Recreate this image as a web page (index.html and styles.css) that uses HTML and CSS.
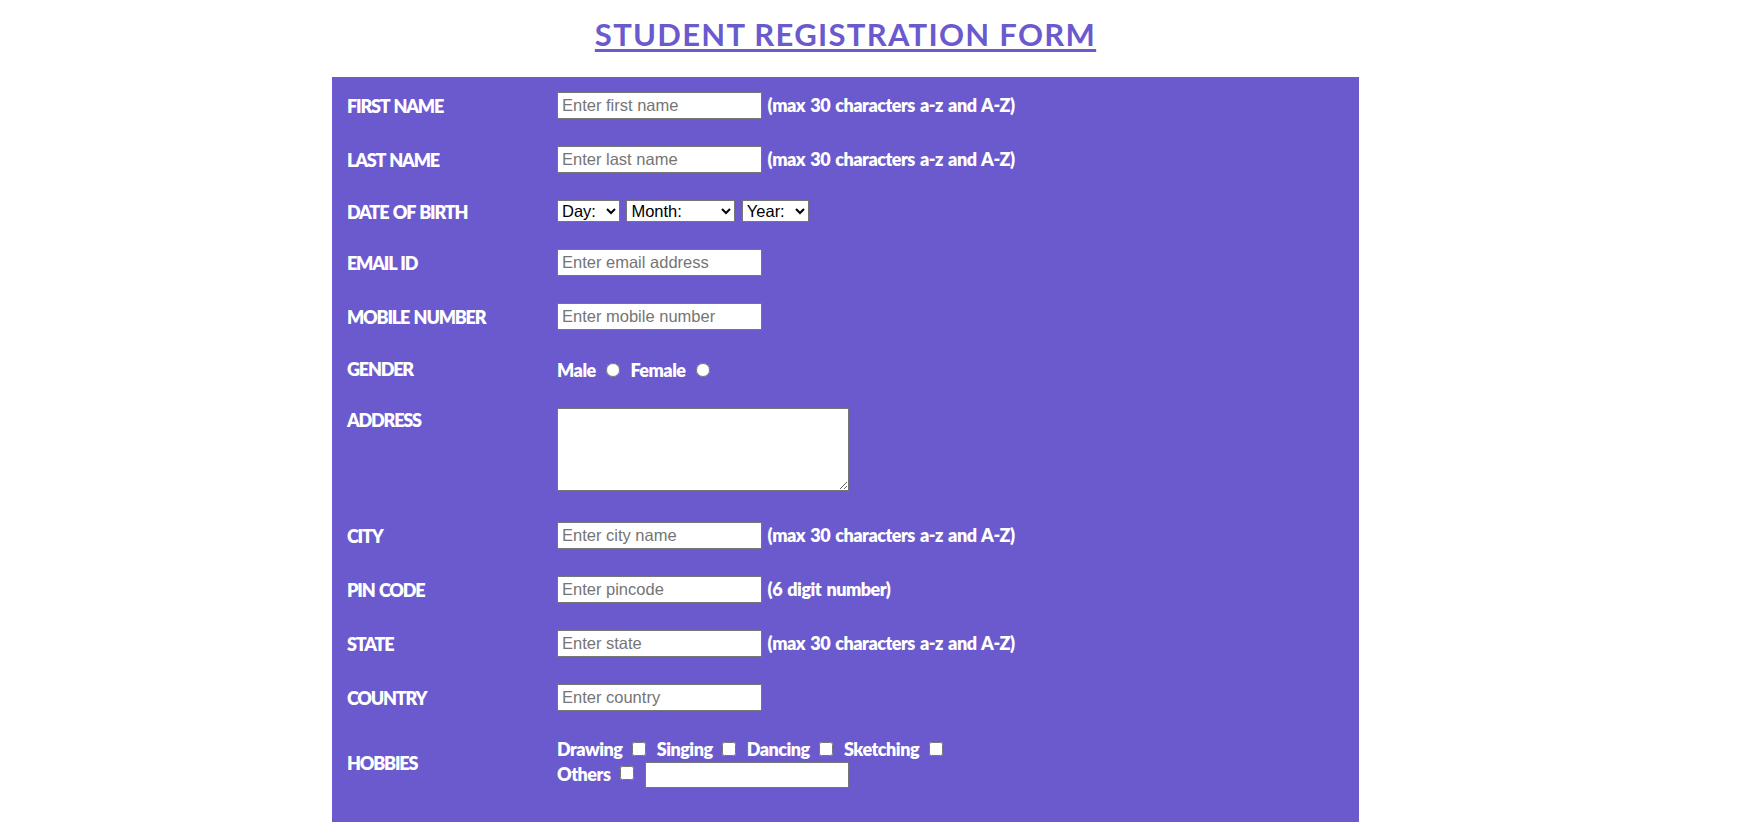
FILE: index.html
```html
<!DOCTYPE html>
<html lang="en">
<head>
<meta charset="utf-8">
<title>Student Registration Form</title>
<link rel="stylesheet" href="styles.css">
</head>
<body>
<div class="page">
  <h1 class="title">STUDENT REGISTRATION FORM</h1>
  <form class="form">
    <div class="label">FIRST NAME</div>
    <div class="field"><input class="text" type="text" placeholder="Enter first name"><span class="hint">(max 30 characters a-z and A-Z)</span></div>

    <div class="label">LAST NAME</div>
    <div class="field"><input class="text" type="text" placeholder="Enter last name"><span class="hint">(max 30 characters a-z and A-Z)</span></div>

    <div class="label">DATE OF BIRTH</div>
    <div class="field">
      <select class="sel sel-day"><option>Day:</option></select><select class="sel sel-month"><option>Month:</option></select><select class="sel sel-year"><option>Year:</option></select>
    </div>

    <div class="label">EMAIL ID</div>
    <div class="field"><input class="text" type="text" placeholder="Enter email address"></div>

    <div class="label">MOBILE NUMBER</div>
    <div class="field"><input class="text" type="text" placeholder="Enter mobile number"></div>

    <div class="label">GENDER</div>
    <div class="flow gender">Male<input class="radio" type="radio" name="g"> Female<input class="radio" type="radio" name="g"></div>

    <div class="label label-top">ADDRESS</div>
    <div class="area-cell"><textarea class="area"></textarea></div>

    <div class="label">CITY</div>
    <div class="field"><input class="text" type="text" placeholder="Enter city name"><span class="hint">(max 30 characters a-z and A-Z)</span></div>

    <div class="label">PIN CODE</div>
    <div class="field"><input class="text" type="text" placeholder="Enter pincode"><span class="hint">(6 digit number)</span></div>

    <div class="label">STATE</div>
    <div class="field"><input class="text" type="text" placeholder="Enter state"><span class="hint">(max 30 characters a-z and A-Z)</span></div>

    <div class="label">COUNTRY</div>
    <div class="field"><input class="text" type="text" placeholder="Enter country"></div>

    <div class="label">HOBBIES</div>
    <div class="flow">Drawing<input class="check" type="checkbox"> Singing<input class="check" type="checkbox"> Dancing<input class="check" type="checkbox"> Sketching<input class="check" type="checkbox"><br>Others<input class="check" type="checkbox"> <input class="text other" type="text"></div>
  </form>
</div>
</body>
</html>
```

FILE: styles.css
```css
html, body {
  margin: 0;
  padding: 0;
  background: #ffffff;
}

body {
  font-family: Lato, "Liberation Sans", sans-serif;
  overflow: hidden;
}

.page {
  width: 1691px;
}

.title {
  margin: 16px 0 24px;
  text-align: center;
  font-size: 31px;
  line-height: 37px;
  font-weight: 700;
  letter-spacing: 1.3px;
  color: #6a5acd;
  text-decoration: underline;
  text-decoration-thickness: 3px;
  text-underline-offset: 3px;
}

.form {
  box-sizing: border-box;
  width: 1027px;
  height: 745px;
  margin: 0 auto;
  padding: 15px 15px 0 15px;
  background: #6a5acd;
  color: #ffffff;
  font-size: 18px;
  font-weight: 800;
  line-height: 23.5px;
  word-spacing: 1.5px;
  letter-spacing: -0.5px;
  display: grid;
  grid-template-columns: 210px 1fr;
  row-gap: 27px;
  align-content: start;
}

.label {
  align-self: center;
  line-height: 20px;
  padding-top: 1px;
  letter-spacing: -1.2px;
}

.label-top {
  align-self: start;
  padding-top: 2px;
}

.field {
  display: flex;
  align-items: center;
}

.flow {
  display: block;
}

.gender {
  box-sizing: border-box;
  height: 23.5px;
  padding-top: 1.5px;
}

.area-cell {
  height: 87.5px;
}

.text {
  box-sizing: border-box;
  width: 205px;
  height: 27px;
  margin: 0;
  padding: 0 4px;
  border: 1px solid #767676;
  border-radius: 0;
  background: #ffffff;
  color: #000000;
  font-family: "Liberation Sans", Arial, sans-serif;
  font-size: 16.5px;
  font-weight: 400;
  letter-spacing: normal;
  word-spacing: normal;
}

.text::placeholder {
  color: #757575;
}

.other {
  width: 204px;
  height: 26px;
  vertical-align: baseline;
}

.hint {
  margin-left: 5.6px;
}

.sel {
  box-sizing: border-box;
  height: 22px;
  margin: 0 6.4px 0 0;
  border: 1px solid #767676;
  border-radius: 0;
  background-color: #ffffff;
  color: #000000;
  font-family: "Liberation Sans", Arial, sans-serif;
  font-size: 16.5px;
  font-weight: 400;
  letter-spacing: normal;
}

.sel-day { width: 63px; }
.sel-month { width: 109px; }
.sel-year { width: 67px; }

.radio {
  width: 14px;
  height: 14px;
  margin: 3px 5px 0 10.5px;
  vertical-align: baseline;
}

.check {
  width: 14px;
  height: 14px;
  margin: 3px 5.5px 0 9.5px;
  vertical-align: baseline;
}

.area {
  display: block;
  box-sizing: border-box;
  width: 292px;
  height: 83px;
  margin: 0;
  border: 1px solid #767676;
  border-radius: 0;
  background: #ffffff;
}
```
